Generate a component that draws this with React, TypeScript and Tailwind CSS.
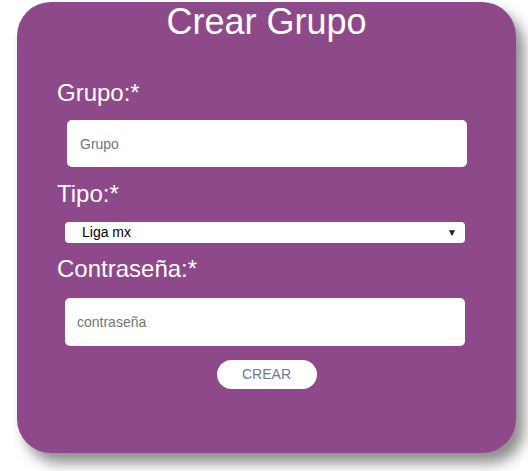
import { useState } from 'react';

export default function App() {
  const [tipo, setTipo] = useState('liga');

  return (
    <div className="min-h-[471px] w-full bg-white font-['Liberation_Sans',Arial,sans-serif]">
      <div className="ml-[17px] pt-[2px]">
        <div className="h-[451px] w-[499px] rounded-[34px] bg-[#8e498b] shadow-[8px_10px_14px_rgba(0,0,0,0.45)]">
          <h1 className="text-center text-[36px] leading-[40px] text-white">Crear Grupo</h1>

          <form className="flex flex-col" onSubmit={(e) => e.preventDefault()}>
            <label className="ml-[40px] mt-[37px] text-[24px] leading-[28px] text-white">Grupo:*</label>
            <input
              placeholder="Grupo"
              className="ml-[50px] mt-[13px] h-[47px] w-[400px] rounded-[5px] bg-white px-[13px] text-[14px] text-gray-800 outline-none placeholder:text-[#757575]"
            />

            <label className="ml-[40px] mt-[13px] text-[24px] leading-[28px] text-white">Tipo:*</label>
            <div className="relative ml-[48px] mt-[14px] w-[400px]">
              <select
                value={tipo}
                onChange={(e) => setTipo(e.target.value)}
                className="block h-[21px] w-full appearance-none rounded-[4px] bg-white pl-[17px] text-[14px] leading-[21px] text-black outline-none"
              >
                <option value="liga">Liga mx</option>
                <option value="champions">Champions League</option>
              </select>
              <span className="pointer-events-none absolute right-[8px] top-[4px] text-[10px] leading-[13px] text-[#222]">▼</span>
            </div>

            <label className="ml-[40px] mt-[12px] text-[24px] leading-[28px] text-white">Contraseña:*</label>
            <input
              type="password"
              placeholder="contraseña"
              className="ml-[48px] mt-[15px] h-[48px] w-[400px] rounded-[5px] bg-white px-[12px] text-[14px] text-gray-800 outline-none placeholder:text-[#757575]"
            />

            <button
              type="submit"
              className="mx-auto mt-[14px] h-[29px] w-[100px] rounded-full bg-white text-[14px] text-[#6b7c90]"
            >
              CREAR
            </button>
          </form>
        </div>
      </div>
    </div>
  );
}
